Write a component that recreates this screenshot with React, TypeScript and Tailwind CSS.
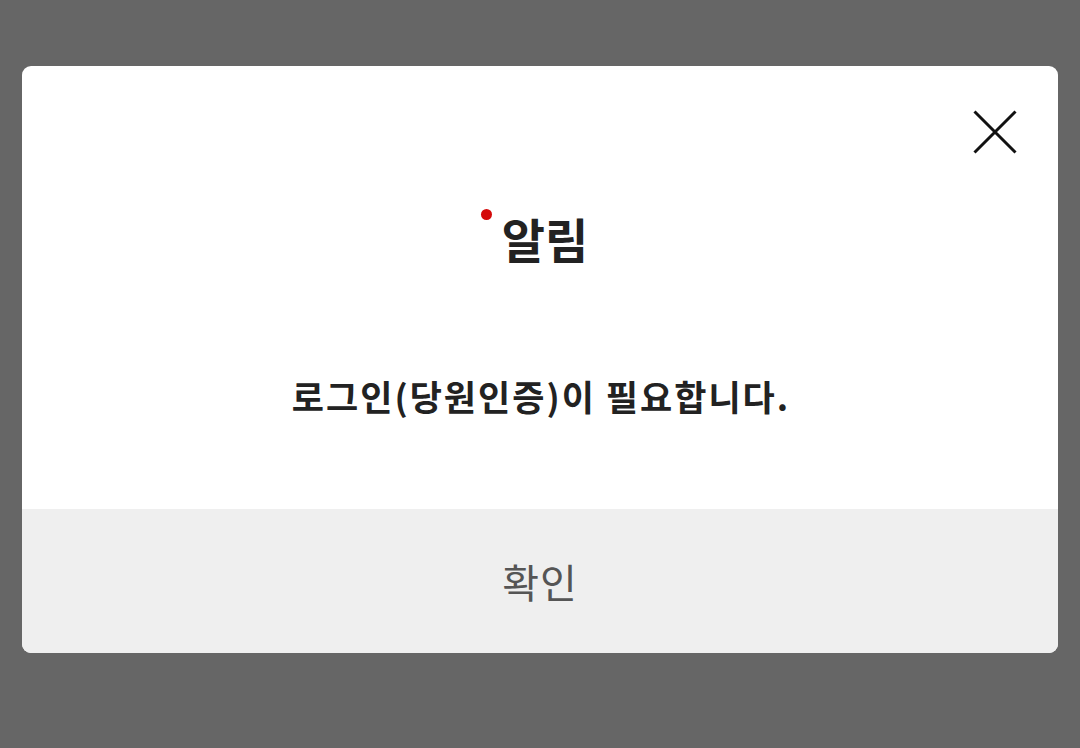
export default function App() {
  return (
    <div
      className="w-full h-[748px] bg-[#666666] pt-[66px] px-[22px]"
      style={{ fontFamily: '"Noto Sans CJK KR", "Noto Sans", sans-serif' }}
    >
      <div className="relative w-full h-[587px] bg-white rounded-[9px] overflow-hidden flex flex-col">
        {/* close */}
        <button className="absolute top-[44px] right-[41px] w-[44px] h-[44px] flex items-center justify-center">
          <svg width="44" height="44" viewBox="0 0 44 44">
            <path d="M1.5 1.5 L42.5 42.5 M42.5 1.5 L1.5 42.5" stroke="#111" strokeWidth="3" fill="none" />
          </svg>
        </button>

        <div className="h-[443px] flex flex-col items-center">
          <div className="mt-[140px] flex items-start pr-[11px]">
            <span className="w-[11px] h-[11px] rounded-full bg-[#d40a0a] mt-[3px] mr-[10px]" />
            <h1 className="text-[47px] leading-[64px] font-bold text-[#222]">알림</h1>
          </div>
          <p className="mt-[106px] text-[35px] leading-[40px] font-bold text-[#222] tracking-[2px] pl-[2px]">
            로그인(당원인증)이 필요합니다.
          </p>
        </div>

        <button className="flex-1 bg-[#efefef] flex items-center justify-center text-[40px] text-[#555] font-normal tracking-[1px]">
          확인
        </button>
      </div>
    </div>
  );
}
